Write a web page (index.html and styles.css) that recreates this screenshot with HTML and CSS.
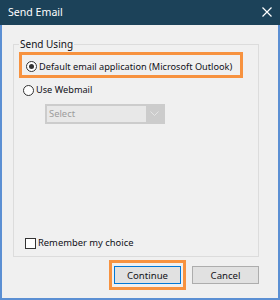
FILE: index.html
```html
<!DOCTYPE html>
<html lang="en">
<head>
    <meta charset="UTF-8">
    <title>Send Email</title>
    <link rel="stylesheet" href="styles.css">
</head>
<body>

<div class="window">
    <div class="titlebar">
        <span class="title">Send Email</span>
        <svg class="close" width="10" height="10" viewBox="0 0 10 10">
            <path d="M0.5 0.5 L9.5 9.5 M9.5 0.5 L0.5 9.5" stroke="#ffffff" stroke-width="1.2" fill="none"/>
        </svg>
    </div>

    <div class="content">
        <fieldset class="group">
            <legend>Send Using</legend>

            <div class="mark">
                <label class="option">
                    <span class="radio checked"></span>
                    Default email application (Microsoft Outlook)
                </label>
            </div>

            <label class="option second">
                <span class="radio"></span>
                Use Webmail
            </label>

            <div class="select">
                <span class="select-text">Select</span>
                <span class="select-arrow">
                    <svg width="9" height="6" viewBox="0 0 9 6">
                        <path d="M0.5 0.5 L4.5 4.5 L8.5 0.5" stroke="#e4e4e4" stroke-width="1" fill="none"/>
                    </svg>
                </span>
            </div>

            <label class="check">
                <span class="box"></span>
                Remember my choice
            </label>
        </fieldset>

        <div class="buttons">
            <div class="mark-btn">
                <button class="btn primary">Continue</button>
            </div>
            <button class="btn">Cancel</button>
        </div>
    </div>
</div>

</body>
</html>
```

FILE: styles.css
```css
body {
    margin: 0;
    font-family: "Noto Sans", sans-serif;
    font-size: 9.2px;
    color: #111118;
}
.window {
    width: 280px;
    height: 300px;
    display: flex;
    flex-direction: column;
}
.titlebar {
    height: 25px;
    background: #1c4259;
    color: #fff;
    display: flex;
    align-items: center;
    justify-content: space-between;
    padding: 0 8px 1px 8px;
    box-sizing: border-box;
    font-size: 10.6px;
}
.content {
    flex: 1;
    background: #f0f0f0;
    border: 2px solid #5b8fd3;
    border-top: none;
    display: flex;
    flex-direction: column;
}
.group {
    margin: 11px 0 0 11px;
    width: 246px;
    height: 221px;
    box-sizing: border-box;
    border: 1px solid #dcdcdc;
    padding: 0 5px;
}
.group legend {
    padding: 0 1px;
    line-height: 16px;
    font-size: 10px;
}
.mark {
    width: 224px;
    box-sizing: border-box;
    border: 3px solid #f7923f;
    height: 26px;
    padding: 3px 0 0 4px;
    display: flex;
    align-items: center;
}
.option {
    display: flex;
    align-items: center;
    gap: 2px;
    line-height: 14px;
    white-space: nowrap;
    font-size: 9.2px;
}
.option.second {
    padding: 5px 0 0 4px;
}
.radio {
    width: 11px;
    height: 11px;
    box-sizing: border-box;
    border: 1px solid #333;
    border-radius: 50%;
    background: #fff;
    display: flex;
    align-items: center;
    justify-content: center;
}
.radio.checked::after {
    content: "";
    width: 5px;
    height: 5px;
    border-radius: 50%;
    background: #333;
}
.select {
    margin: 7px 0 0 26px;
    width: 120px;
    height: 20px;
    box-sizing: border-box;
    background: #cccccc;
    padding: 2px;
    display: flex;
}
.select-text {
    flex: 1;
    background: #e8e8e8;
    color: #9c9c9c;
    padding-left: 2px;
    line-height: 16px;
    font-size: 9.4px;
}
.select-arrow {
    width: 17px;
    display: flex;
    align-items: center;
    justify-content: center;
}
.check {
    margin: 112px 0 0 6px;
    display: flex;
    align-items: center;
    gap: 2px;
    line-height: 14px;
    font-size: 9.4px;
}
.box {
    width: 11px;
    height: 11px;
    box-sizing: border-box;
    border: 1px solid #333;
    background: #fff;
}
.buttons {
    width: 246px;
    margin: 3px 0 0 11px;
    display: flex;
    justify-content: flex-end;
    align-items: center;
    gap: 6px;
}
.mark-btn {
    border: 3px solid #f7923f;
    padding: 3px 2px;
    display: flex;
}
.btn {
    width: 67px;
    height: 18px;
    box-sizing: border-box;
    margin: 0;
    padding: 0;
    font-family: "Noto Sans", sans-serif;
    font-size: 9.6px;
    background: #e1e1e1;
    border: 1px solid #adadad;
    color: #111118;
}
.btn.primary {
    border-color: #0078d7;
}
```
